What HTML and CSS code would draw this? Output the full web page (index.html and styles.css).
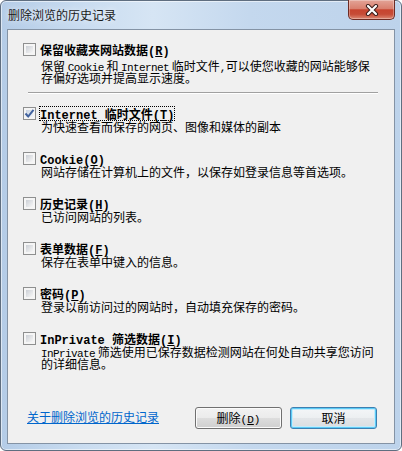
FILE: index.html
```html
<!DOCTYPE html>
<html lang="zh-CN">
<head>
    <meta charset="UTF-8">
    <meta name="viewport" content="width=device-width, initial-scale=1.0">
    <title>删除浏览的历史记录</title>
    <link rel="stylesheet" href="styles.css">
</head>
<body>

    <div class="window">
        <div class="titlebar">
            <span class="title">删除浏览的历史记录</span>
            <button class="close" title="关闭">
                <svg width="14" height="12" viewBox="0 0 14 12">
                    <path d="M3 2 L11 10 M11 2 L3 10" stroke="#3b1d1a" stroke-width="4.2" stroke-linecap="round"/>
                    <path d="M3 2 L11 10 M11 2 L3 10" stroke="#ffffff" stroke-width="2.2" stroke-linecap="round"/>
                </svg>
            </button>
        </div>

        <div class="client">
            <div class="option top">
                <span class="check"></span>
                <div class="text">
                    <div class="label">保留收藏夹网站数据<span class="en">(<u>R</u>)</span></div>
                    <div class="desc first">保留 <span class="en">Cookie</span> 和 <span class="en">Internet</span> 临时文件<span class="en">,</span>可以使您收藏的网站能够保<br>存偏好选项并提高显示速度。</div>
                </div>
            </div>

            <div class="sep"></div>

            <div class="option">
                <span class="check checked">
                    <svg width="11" height="11" viewBox="0 0 11 11">
                        <path d="M1.5 5.5 L4.2 8.5 L9.5 1.8" fill="none" stroke="#41629e" stroke-width="2"/>
                    </svg>
                </span>
                <div class="text">
                    <div class="label focus"><span class="en">Internet </span>临时文件<span class="en">(<u>T</u>)</span></div>
                    <div class="desc">为快速查看而保存的网页、图像和媒体的副本</div>
                </div>
            </div>

            <div class="option">
                <span class="check"></span>
                <div class="text">
                    <div class="label"><span class="en">Cookie(<u>O</u>)</span></div>
                    <div class="desc">网站存储在计算机上的文件，以保存如登录信息等首选项。</div>
                </div>
            </div>

            <div class="option">
                <span class="check"></span>
                <div class="text">
                    <div class="label">历史记录<span class="en">(<u>H</u>)</span></div>
                    <div class="desc">已访问网站的列表。</div>
                </div>
            </div>

            <div class="option">
                <span class="check"></span>
                <div class="text">
                    <div class="label">表单数据<span class="en">(<u>F</u>)</span></div>
                    <div class="desc">保存在表单中键入的信息。</div>
                </div>
            </div>

            <div class="option">
                <span class="check"></span>
                <div class="text">
                    <div class="label">密码<span class="en">(<u>P</u>)</span></div>
                    <div class="desc">登录以前访问过的网站时，自动填充保存的密码。</div>
                </div>
            </div>

            <div class="option">
                <span class="check"></span>
                <div class="text">
                    <div class="label"><span class="en">InPrivate </span>筛选数据<span class="en">(<u>I</u>)</span></div>
                    <div class="desc"><span class="en">InPrivate</span> 筛选使用已保存数据检测网站在何处自动共享您访问<br>的详细信息。</div>
                </div>
            </div>

            <div class="footer">
                <a href="#" class="help">关于删除浏览的历史记录</a>
                <div class="buttons">
                    <button class="btn">删除<span class="en">(<u>D</u>)</span></button>
                    <button class="btn default">取消</button>
                </div>
            </div>
        </div>
    </div>

</body>
</html>
```

FILE: styles.css
```css
* {
    box-sizing: border-box;
}
body {
    margin: 0;
    background: #ffffff;
    font-family: "Noto Sans CJK SC", sans-serif;
    font-size: 12px;
    color: #000;
}
.window {
    width: 402px;
    height: 451px;
    display: flex;
    flex-direction: column;
    padding: 0 6px 6px;
    border: 1px solid #5f6e80;
    border-radius: 6px;
    background: linear-gradient(to right, #b4cce7 0%, #c9dcf0 20%, #d6e5f4 38%, #c4d8ee 62%, #bdd3eb 100%);
    box-shadow: inset 0 0 0 1px rgba(255, 255, 255, 0.55);
}
.titlebar {
    height: 28px;
    flex: none;
    display: flex;
    align-items: flex-start;
}
.title {
    padding: 6px 0 0 1px;
    line-height: 16px;
    color: #1a1a1a;
    text-shadow: 0 0 6px rgba(255, 255, 255, 0.9);
}
.close {
    margin-left: auto;
    margin-top: -1px;
    width: 47px;
    height: 20px;
    padding: 0;
    border: 1px solid #6d2b23;
    border-top: none;
    border-radius: 0 0 5px 5px;
    background: linear-gradient(to bottom, #e3a497 0%, #d9806f 45%, #c7442f 52%, #c64b36 75%, #dc8873 100%);
    box-shadow: inset 0 0 0 1px rgba(255, 255, 255, 0.3);
    display: flex;
    align-items: center;
    justify-content: center;
}
.close svg {
    display: block;
}
.client {
    flex: 1;
    min-height: 0;
    display: flex;
    flex-direction: column;
    border: 1px solid #8493a5;
    background: #f0f0f0;
    padding: 12px 17px 14px 15px;
}
.option {
    display: flex;
    gap: 3px;
    margin-bottom: 18px;
}
.option.top {
    margin-bottom: 8px;
}
.check {
    flex: none;
    width: 13px;
    height: 13px;
    margin-top: 1px;
    padding: 2px;
    border: 1px solid #8e8f8f;
    background: linear-gradient(135deg, #cbcfd5, #f7f7f7) content-box, #f5f5f5;
    position: relative;
}
.check.checked {
    background: linear-gradient(135deg, #c8d3e2, #f2f5f9) content-box, #f5f5f5;
}
.check svg {
    position: absolute;
    left: 0;
    top: 0;
}
.text {
    display: flex;
    flex-direction: column;
    align-items: flex-start;
}
.en {
    line-height: 0;
}
.label {
    font-weight: bold;
    height: 15px;
    line-height: 15px;
    padding: 0 1px;
    white-space: nowrap;
}
.label .en {
    font-family: "Liberation Mono", monospace;
    font-size: 12px;
}
.focus {
    outline: 1px dotted #000;
    outline-offset: -1px;
}
.desc {
    line-height: 12px;
    padding-left: 2px;
    white-space: nowrap;
}
.desc.first {
    margin-top: 3px;
}
.desc .en {
    font-family: "Liberation Mono", monospace;
    font-size: 11px;
    letter-spacing: -0.6px;
}
.sep {
    flex: none;
    height: 2px;
    margin: 0 0 12px 5px;
    width: 350px;
    border-top: 1px solid #a0a0a0;
    border-bottom: 1px solid #ffffff;
}
.footer {
    margin-top: auto;
    display: flex;
    align-items: center;
    justify-content: space-between;
}
.help {
    margin-left: 4px;
    margin-top: -3px;
    color: #0066cc;
    text-decoration: underline;
}
.buttons {
    display: flex;
    gap: 8px;
}
.btn {
    width: 87px;
    height: 22px;
    padding: 0;
    border: 1px solid #707070;
    border-radius: 3px;
    background: linear-gradient(to bottom, #f2f2f2 0%, #ebebeb 50%, #dddddd 51%, #cfcfcf 100%);
    box-shadow: inset 0 0 0 1px #fbfbfb;
    font-family: "Noto Sans CJK SC", sans-serif;
    font-size: 12px;
    line-height: 20px;
    color: #000;
}
.btn .en {
    font-family: "Liberation Mono", monospace;
    font-size: 11px;
}
.btn.default {
    border-color: #3c7fb1;
    background: linear-gradient(to bottom, #f4f6f8 0%, #eceff1 50%, #e3e6e9 51%, #dadde0 100%);
    box-shadow: inset 0 0 0 1px #5ccbf6, inset 0 0 0 2px #c4ebfb;
}
```
